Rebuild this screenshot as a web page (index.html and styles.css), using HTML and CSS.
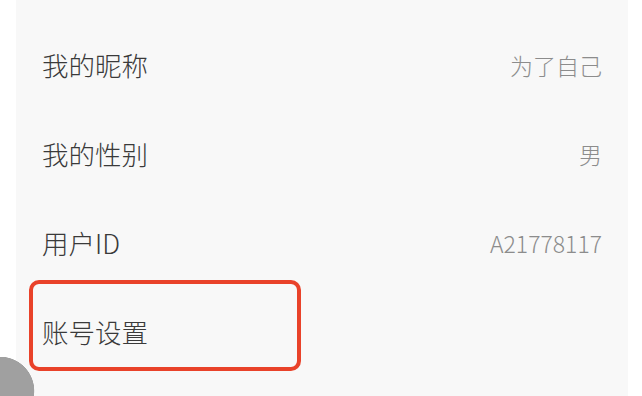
FILE: index.html
```html
<!DOCTYPE html>
<html lang="zh-CN">
<head>
    <meta charset="UTF-8">
    <meta name="viewport" content="width=device-width, initial-scale=1.0">
    <title>个人资料</title>
    <link rel="stylesheet" href="styles.css">
</head>
<body>
    <div class="panel">
        <div class="row">
            <span class="label">我的昵称</span>
            <span class="value">为了自己</span>
        </div>
        <div class="row">
            <span class="label">我的性别</span>
            <span class="value">男</span>
        </div>
        <div class="row">
            <span class="label">用户ID</span>
            <span class="value">A21778117</span>
        </div>
        <div class="row marked">
            <span class="label">账号设置</span>
            <span class="highlight"></span>
        </div>
    </div>

    <div class="float-btn"></div>
</body>
</html>
```

FILE: styles.css
```css
html, body {
    margin: 0;
    height: 396px;
    overflow: hidden;
}

body {
    background-color: #fff;
    font-family: "Noto Sans CJK SC", "Noto Sans", sans-serif;
    font-weight: 300;
    position: relative;
}

.panel {
    margin-left: 16px;
    width: 612px;
    height: 396px;
    box-sizing: border-box;
    padding-top: 20px;
    background-color: #f8f8f8;
}

.row {
    height: 89px;
    padding: 0 26px;
    display: flex;
    align-items: center;
    justify-content: space-between;
    position: relative;
}

.label {
    font-size: 26.5px;
    color: #3a3a3a;
}

.value {
    font-size: 23px;
    color: #8c8c8c;
}

/* red annotation box round the last row */
.highlight {
    position: absolute;
    left: 13px;
    top: -7px;
    width: 272px;
    height: 91px;
    box-sizing: border-box;
    border: 4px solid #e9422a;
    border-radius: 10px;
}

/* floating button, mostly off screen */
.float-btn {
    position: absolute;
    left: 0;
    top: 357px;
    width: 36px;
    height: 39px;
    background: radial-gradient(circle at 0 34px, #a0a0a0 34px, transparent 34.6px);
}
```
